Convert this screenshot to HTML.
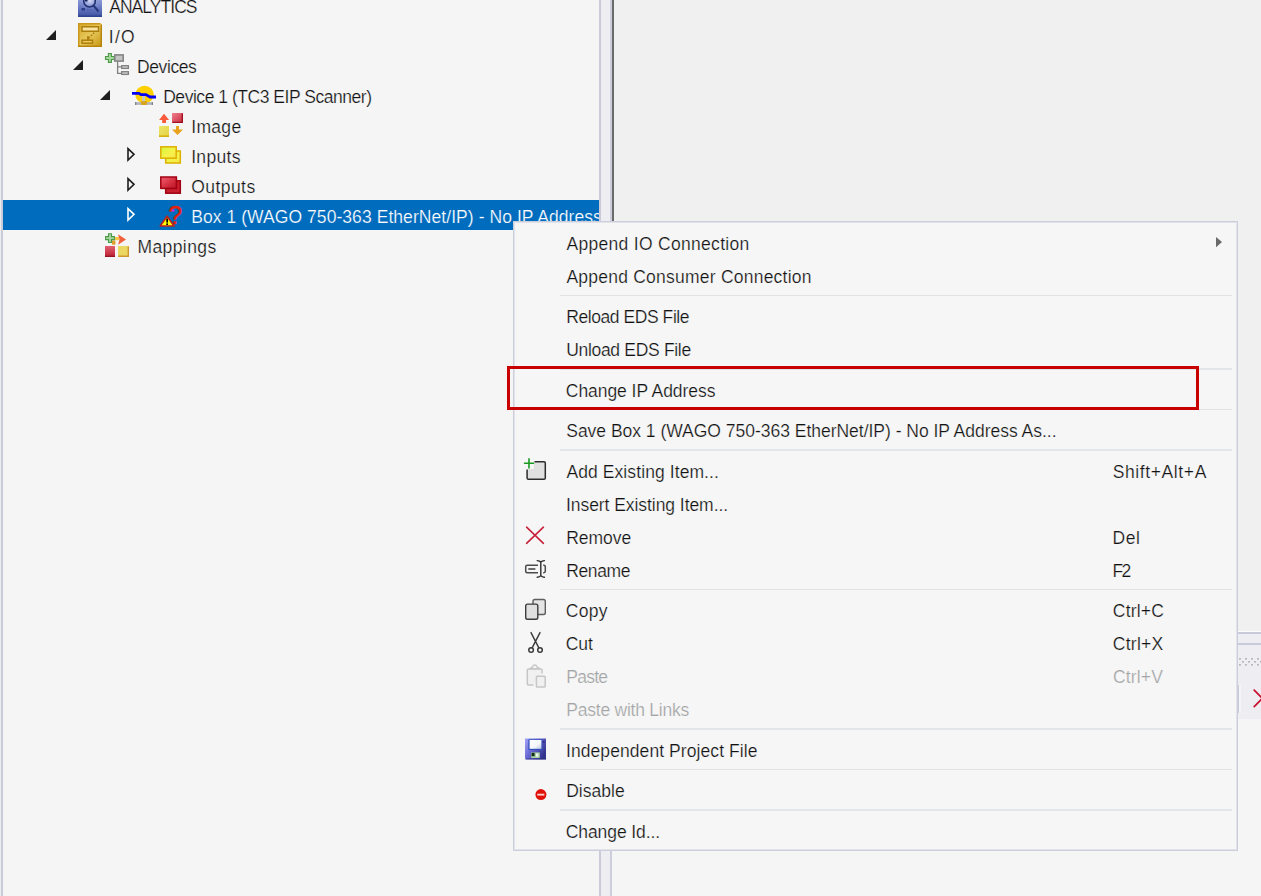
<!DOCTYPE html>
<html lang="en"><head><meta charset="utf-8"><title>Solution Explorer - Context Menu</title>
<style>
html,body{margin:0;padding:0}
body{width:1261px;height:896px;overflow:hidden;position:relative;background:#f5f5f5;font-family:"Liberation Sans",sans-serif;font-size:17.5px;color:#121212}
div,span,svg{position:absolute;display:block}
.t{white-space:nowrap;line-height:20px;height:20px;-webkit-text-stroke:0.22px #f6f6f6}
#tree .t{-webkit-text-stroke-color:#f5f5f5}
#tree .t.w{-webkit-text-stroke-color:#006cbe}
#tree{left:0;top:0;width:599px;height:896px;overflow:hidden;background:#f5f5f5}
#tree .edge0{left:0;top:0;width:1px;height:896px;background:#eeeef2}
#tree .edge1{left:1px;top:0;width:2px;height:896px;background:#c9cbd9}
.row{left:3px;width:596px;height:30px}
.row.sel{background:#006cbe}
#split{left:599px;top:0;width:13px;height:896px;background:#eeeef2}
#edge{left:612px;top:0;width:2px;height:632px;background:#6a6a6a}
#split i{position:absolute;display:block;top:0;height:896px}
#right{left:612px;top:0;width:649px;height:896px;background:#f0f0f0}
#rlow{left:1238px;top:631px;width:23px;height:88px;background:#eeeef2}
#rbot{left:612px;top:719px;width:649px;height:177px;background:#f5f5f5}
#menu{left:513px;top:221px;width:723px;height:628px;background:#f6f6f6;border:1px solid #cccedb;box-shadow:inset 0 0 0 1px #e1e2ea}
.sep{left:560px;width:672px;background:#e0e3e6;height:1px}
.sep.k{height:2px;background:#e3e6e9}
#ctx{left:0;top:0;width:1261px;height:896px}
#hl{left:507px;top:366px;width:686px;height:38px;border:3px solid #c80000}
</style></head>
<body>
<div id="right"></div>
<div id="rbot"></div>
<div id="rlow"><svg width="23" height="88" viewBox="1238 631 23 88" style="left:0;top:0"><rect x="1238" y="631" width="23" height="1" fill="#fdfdfd"/><rect x="1238" y="632" width="23" height="2" fill="#c9cbdb"/><rect x="1238" y="643" width="23" height="2" fill="#c9cbdb"/><rect x="1239.25" y="658.15" width="1.4" height="1.4" fill="#969696"/><rect x="1245.25" y="658.15" width="1.4" height="1.4" fill="#969696"/><rect x="1251.25" y="658.15" width="1.4" height="1.4" fill="#969696"/><rect x="1257.25" y="658.15" width="1.4" height="1.4" fill="#969696"/><rect x="1242.25" y="661.15" width="1.4" height="1.4" fill="#969696"/><rect x="1248.25" y="661.15" width="1.4" height="1.4" fill="#969696"/><rect x="1254.25" y="661.15" width="1.4" height="1.4" fill="#969696"/><rect x="1260.25" y="661.15" width="1.4" height="1.4" fill="#969696"/><rect x="1239.25" y="664.15" width="1.4" height="1.4" fill="#969696"/><rect x="1245.25" y="664.15" width="1.4" height="1.4" fill="#969696"/><rect x="1251.25" y="664.15" width="1.4" height="1.4" fill="#969696"/><rect x="1257.25" y="664.15" width="1.4" height="1.4" fill="#969696"/><rect x="1238" y="685" width="1" height="28" fill="#c9cbdb"/><rect x="1239" y="685" width="2" height="28" fill="#f5f5f7"/><path d="M1254.2 690.2 L1263 699 M1254.2 706.6 L1263 697.8" stroke="#c8102e" stroke-width="1.7" fill="none" stroke-linecap="round"/></svg></div>
<div id="tree" role="tree" aria-label="Solution Explorer"><div class="edge0"></div><div class="edge1"></div>
<div class="row" style="top:-10px"></div>
<div class="row" style="top:20px"></div>
<div class="row" style="top:50px"></div>
<div class="row" style="top:80px"></div>
<div class="row" style="top:110px"></div>
<div class="row" style="top:140px"></div>
<div class="row" style="top:170px"></div>
<div class="row sel" style="top:200px"></div>
<div class="row" style="top:230px"></div>
<svg width="13" height="14" viewBox="45 28 13 14" style="left:45px;top:28px"><polygon points="56,30 56,40 46,40" fill="#1e1e1e"/></svg>
<svg width="13" height="14" viewBox="72 58 13 14" style="left:72px;top:58px"><polygon points="83,60 83,70 73,70" fill="#1e1e1e"/></svg>
<svg width="13" height="14" viewBox="99 88 13 14" style="left:99px;top:88px"><polygon points="110,90 110,100 100,100" fill="#1e1e1e"/></svg>
<svg width="13" height="20" viewBox="125 145 13 20" style="left:125px;top:145px"><path d="M128 148.6 L128 160.1 L134 154.35 Z" fill="none" stroke="#1e1e1e" stroke-width="1.6" stroke-linejoin="miter"/></svg>
<svg width="13" height="20" viewBox="125 175 13 20" style="left:125px;top:175px"><path d="M128 178.6 L128 190.1 L134 184.35 Z" fill="none" stroke="#1e1e1e" stroke-width="1.6" stroke-linejoin="miter"/></svg>
<svg width="13" height="20" viewBox="125 205 13 20" style="left:125px;top:205px"><path d="M128 208.6 L128 220.1 L134 214.35 Z" fill="none" stroke="#ffffff" stroke-width="1.6" stroke-linejoin="miter"/></svg>
<svg width="24" height="24" viewBox="78 -7 24 24" style="left:78px;top:-7px"><defs><linearGradient id="ga" x1="0" y1="0" x2="0" y2="1"><stop offset="0" stop-color="#a9b4e6"/><stop offset="0.55" stop-color="#6f80c8"/><stop offset="1" stop-color="#3a4f9e"/></linearGradient><radialGradient id="gb" cx="0.5" cy="0.35" r="0.5"><stop offset="0" stop-color="#dfe4fa" stop-opacity="0.9"/><stop offset="1" stop-color="#8a98d6" stop-opacity="0"/></radialGradient></defs><rect x="78" y="-7" width="24" height="24" fill="url(#ga)"/><rect x="80" y="-5" width="20" height="17" fill="url(#gb)"/><circle cx="89.5" cy="1.2" r="5.8" fill="none" stroke="#1f2f6e" stroke-width="1.6"/><path d="M93.5 5.5 L98.5 11.5" stroke="#26377a" stroke-width="2"/><rect x="81.5" y="8" width="3.5" height="2.5" fill="#2b3d85"/><rect x="87" y="9.2" width="1.5" height="1.5" fill="#4e60aa"/><rect x="90" y="9.2" width="1.5" height="1.5" fill="#4e60aa"/><rect x="85" y="-1" width="2.5" height="2.5" fill="#16245c"/><rect x="90" y="-2" width="3" height="1.6" fill="#2b3d85"/><rect x="78" y="15.5" width="24" height="1.5" fill="#2f4390"/></svg>
<svg width="24" height="24" viewBox="78 23 24 24" style="left:78px;top:23px"><defs><linearGradient id="gi" x1="0" y1="0" x2="1" y2="1"><stop offset="0" stop-color="#d6a526"/><stop offset="0.5" stop-color="#e7c85c"/><stop offset="1" stop-color="#c4930f"/></linearGradient></defs><path d="M78 23 H100.5 L102 24.5 V47 H78 Z" fill="url(#gi)"/><path d="M78.75 47 V23.75 H100.2" fill="none" stroke="#c9981c" stroke-width="1.5"/><path d="M78 46.25 H101.25 V24.5" fill="none" stroke="#b5850c" stroke-width="1.5"/><rect x="82" y="26.75" width="16.5" height="4.5" fill="#f6e3a0" stroke="#ad7d0a" stroke-width="1.5"/><path d="M94.2 32.6 L89.8 37" stroke="#ad7d0a" stroke-width="1.5" stroke-dasharray="1.6 1.4"/><rect x="87" y="36.3" width="2.6" height="3.4" fill="#ad7d0a"/><rect x="82" y="40.2" width="10.5" height="3" fill="#ecc95a" stroke="#ad7d0a" stroke-width="1.5"/></svg>
<svg width="26" height="24" viewBox="104 52 26 24" style="left:104px;top:52px"><path d="M108.4 53.550000000000004 H111.4 V56.45 H114.30000000000001 V59.45 H111.4 V62.35 H108.4 V59.45 H105.5 V56.45 H108.4 Z" fill="#a5d69c" stroke="#4b9a48" stroke-width="1.1"/><rect x="114.8" y="54.9" width="8.4" height="6.2" fill="#c3c3c3" stroke="#808080" stroke-width="1.5"/><path d="M117.6 61.5 V73.3 H121.5 M117.6 66.9 H121.5" fill="none" stroke="#808080" stroke-width="1.3"/><rect x="121.7" y="65.7" width="6.7" height="2.7" fill="#cfcfcf" stroke="#808080" stroke-width="1.3"/><rect x="121.7" y="71.7" width="6.7" height="2.7" fill="#cfcfcf" stroke="#808080" stroke-width="1.3"/></svg>
<svg width="27" height="23" viewBox="131 84 27 23" style="left:131px;top:84px"><ellipse cx="144.55" cy="94.6" rx="9.3" ry="8.8" fill="#ffd000"/><rect x="142.2" y="96" width="2.8" height="6" fill="#c4c6cf"/><rect x="135" y="102.1" width="18" height="2.8" fill="#b4b6be"/><rect x="135" y="102.1" width="1.3" height="2.8" fill="#808080"/><rect x="151.7" y="102.1" width="1.3" height="2.8" fill="#808080"/><rect x="141.1" y="101.2" width="5.8" height="3.7" fill="#d9a21c"/><path d="M132 93.3 H139 L141 94.6 H146 L150 97 H156" fill="none" stroke="#0000f5" stroke-width="2.8" stroke-linejoin="round"/></svg>
<svg width="26" height="26" viewBox="158 112 26 26" style="left:158px;top:112px"><defs><linearGradient id="gr1" x1="0" y1="0" x2="1" y2="1"><stop offset="0" stop-color="#f08090"/><stop offset="1" stop-color="#c8283c"/></linearGradient><linearGradient id="gy1" x1="0" y1="0" x2="1" y2="1"><stop offset="0" stop-color="#ece66a"/><stop offset="1" stop-color="#e6d040"/></linearGradient></defs><path d="M164 113.8 L169.1 120 H166 V123 H162.2 V120 H159.1 Z" fill="#f85a3c"/><rect x="172" y="113" width="11" height="10" fill="url(#gr1)"/><path d="M172.5 122.4 H182.3 V113.5" fill="none" stroke="#a0101f" stroke-width="1.3"/><rect x="159" y="126" width="10" height="11" fill="url(#gy1)"/><rect x="159" y="135.4" width="10" height="1.6" fill="#d6b010"/><path d="M176 126 H179 V129.4 H183 L177.5 135 L172 129.4 H176 Z" fill="#e9a21e"/></svg>
<svg width="24" height="20" viewBox="159 145 24 20" style="left:159px;top:145px"><defs><linearGradient id="gy2" x1="0" y1="0" x2="1" y2="1"><stop offset="0" stop-color="#d4f63c"/><stop offset="0.6" stop-color="#f6f24a"/><stop offset="1" stop-color="#f6e24a"/></linearGradient></defs><rect x="165.7" y="151" width="14.6" height="12" fill="url(#gy2)" stroke="#deb000" stroke-width="1.5"/><rect x="160.8" y="146.8" width="15.4" height="11.4" fill="url(#gy2)" stroke="#deb000" stroke-width="1.5"/></svg>
<svg width="24" height="20" viewBox="159 175 24 20" style="left:159px;top:175px"><defs><linearGradient id="gr2" x1="0" y1="0" x2="1" y2="1"><stop offset="0" stop-color="#f26272"/><stop offset="0.6" stop-color="#d22c3c"/><stop offset="1" stop-color="#bc1626"/></linearGradient></defs><rect x="165.7" y="180.8" width="14.6" height="12.4" fill="#c81e2e" stroke="#a00012" stroke-width="1.5"/><rect x="160.8" y="177" width="15.6" height="11.4" fill="url(#gr2)" stroke="#a00012" stroke-width="1.5"/></svg>
<svg width="25" height="25" viewBox="158 204 25 25" style="left:158px;top:204px"><text x="175.1" y="224" text-anchor="middle" font-family="Liberation Sans, sans-serif" font-weight="normal" font-size="25" stroke="#e2200e" stroke-width="0.5" fill="#e2200e">?</text><rect x="172.4" y="209.8" width="2" height="1.6" fill="#ff10f0"/><path d="M167.1 216.2 L174 226 H160.2 Z" fill="#ffff00" stroke="#c0201c" stroke-width="1.6" stroke-linejoin="round"/><rect x="166.3" y="218.6" width="1.7" height="4" fill="#000"/><rect x="166.3" y="223.4" width="1.7" height="1.6" fill="#000"/></svg>
<svg width="27" height="26" viewBox="104 232 27 26" style="left:104px;top:232px"><defs><linearGradient id="gr3" x1="0" y1="0" x2="0" y2="1"><stop offset="0" stop-color="#e06070"/><stop offset="0.8" stop-color="#c42c3e"/><stop offset="1" stop-color="#8c0e1e"/></linearGradient></defs><rect x="112" y="240.5" width="3.4" height="4.2" fill="#dea02a"/><rect x="114.5" y="237" width="5" height="3.2" fill="#f8c648"/><path d="M118 234.2 L126 239.5 L118 244.8 L119.6 239.5 Z" fill="#f0603a"/><path d="M108.5 233.75 H111.5 V236.65 H114.4 V239.65 H111.5 V242.55 H108.5 V239.65 H105.6 V236.65 H108.5 Z" fill="#a5d69c" stroke="#4b9a48" stroke-width="1.1"/><rect x="105" y="246" width="10" height="11" fill="url(#gr3)"/><rect x="118" y="246" width="11" height="11" fill="#ead862"/><path d="M118.4 256.3 H128.3 V246.4" fill="none" stroke="#cf982e" stroke-width="1.4"/></svg>
<span class="t" style="left:109.20px;top:-3px;letter-spacing:-0.957px">ANALYTICS</span>
<span class="t" style="left:108.84px;top:27px;letter-spacing:1.232px">I/O</span>
<span class="t" style="left:137.04px;top:57px;letter-spacing:-0.409px">Devices</span>
<span class="t" style="left:163.21px;top:87px;letter-spacing:-0.467px">Device 1 (TC3 EIP Scanner)</span>
<span class="t" style="left:191.19px;top:117px;letter-spacing:0.334px">Image</span>
<span class="t" style="left:191.19px;top:147px;letter-spacing:0.308px">Inputs</span>
<span class="t" style="left:191.23px;top:177px;letter-spacing:0.443px">Outputs</span>
<span class="t w" style="left:191.20px;top:207px;letter-spacing:0.065px;color:#ffffff">Box 1 (WAGO 750-363 EtherNet/IP) - No IP Address</span>
<span class="t" style="left:137.40px;top:237px;letter-spacing:0.422px">Mappings</span>
</div>
<div id="split"><i style="left:0;width:2px;background:#c9cbd9"></i><i style="left:11px;width:2px;background:#cccedb"></i></div><div id="edge"></div>
<div id="ctx" role="menu" aria-label="Context menu"><div id="menu"></div>
<div class="sep" style="top:295px"></div>
<div class="sep k" style="top:368px"></div>
<div class="sep" style="top:409px"></div>
<div class="sep k" style="top:449px"></div>
<div class="sep" style="top:589px"></div>
<div class="sep k" style="top:728px"></div>
<div class="sep" style="top:769px"></div>
<div class="sep k" style="top:809px"></div>
<svg width="10" height="14" viewBox="1214 235 10 14" style="left:1214px;top:235px"><polygon points="1216,237 1222,242.1 1216,247.2" fill="#6a6a6a"/></svg>
<svg width="26" height="26" viewBox="522 456 26 26" style="left:522px;top:456px"><path d="M534.5 461.75 H544 a1.3 1.3 0 0 1 1.3 1.3 V478 a1.3 1.3 0 0 1 -1.3 1.3 H528.4 a1.3 1.3 0 0 1 -1.3 -1.3 V469.5" fill="#e0e0e0" stroke="#2c2c2c" stroke-width="1.5"/><rect x="527.8" y="462.4" width="6" height="6.6" fill="#f6f6f6"/><path d="M529 458.2 V468.4 M523.9 463.3 H534.1" stroke="#1a9a20" stroke-width="1.6" fill="none"/></svg>
<svg width="22" height="21" viewBox="524 525 22 21" style="left:524px;top:525px"><path d="M526.6 527.2 L543.4 543.3 M543.4 527.2 L526.6 543.3" stroke="#c8203a" stroke-width="1.6" fill="none" stroke-linecap="round"/></svg>
<svg width="25" height="22" viewBox="523 558 25 22" style="left:523px;top:558px"><path d="M538 565.25 H527.2 a1.5 1.5 0 0 0 -1.5 1.5 V571.2 a1.5 1.5 0 0 0 1.5 1.5 H538 M543.2 565.25 H543.9 a1.4 1.4 0 0 1 1.4 1.4 V571.3 a1.4 1.4 0 0 1 -1.4 1.4 H543.2" fill="none" stroke="#4a4a4a" stroke-width="1.5"/><path d="M528.3 569 H535.4" stroke="#4a4a4a" stroke-width="1.6" fill="none"/><path d="M537.2 560.6 Q539.8 560.8 540.8 562.2 Q541.8 560.8 544.4 560.6 M540.8 562 V575.8 M537.2 577.3 Q539.8 577.1 540.8 575.7 Q541.8 577.1 544.4 577.3" fill="none" stroke="#2c2c2c" stroke-width="1.4" stroke-linecap="round"/></svg>
<svg width="25" height="25" viewBox="523 597 25 25" style="left:523px;top:597px"><rect x="533" y="599.5" width="12.3" height="15" rx="1.8" fill="#e4e4e4" stroke="#5e5e5e" stroke-width="1.4"/><rect x="525.7" y="604.1" width="12.1" height="15.1" rx="1.8" fill="#e0e0e0" stroke="#3c3c3c" stroke-width="1.4"/></svg>
<svg width="20" height="25" viewBox="526 630 20 25" style="left:526px;top:630px"><path d="M531 632.6 L538.6 647.4 M540 632.6 L532.4 647.4" stroke="#3a3a3a" stroke-width="1.4" fill="none" stroke-linecap="round"/><circle cx="531.1" cy="650" r="2.3" fill="none" stroke="#3a3a3a" stroke-width="1.5"/><circle cx="540" cy="650" r="2.3" fill="none" stroke="#3a3a3a" stroke-width="1.5"/></svg>
<svg width="24" height="28" viewBox="524 662 24 28" style="left:524px;top:662px"><path d="M533.5 685.1 H528.6 a1.3 1.3 0 0 1 -1.3 -1.3 V670.3 a1.3 1.3 0 0 1 1.3 -1.3 H540.8 a1.3 1.3 0 0 1 1.3 1.3 V673.4" fill="#f0f0f0" stroke="#c6c6c6" stroke-width="1.5"/><path d="M530 668.6 L532.6 666.9 a2.2 2.4 0 0 1 4.3 0 L539.6 668.6 Z" fill="#f6f6f6" stroke="#c6c6c6" stroke-width="1.4" stroke-linejoin="round"/><rect x="536.4" y="676.3" width="8.8" height="10.8" rx="0.8" fill="#f0f0f0" stroke="#c6c6c6" stroke-width="1.5"/></svg>
<svg width="24" height="24" viewBox="524 737 24 24" style="left:524px;top:737px"><defs><linearGradient id="gf" x1="0" y1="0" x2="1" y2="0.6"><stop offset="0" stop-color="#a4a4fa"/><stop offset="0.45" stop-color="#6a6ad6"/><stop offset="1" stop-color="#34348e"/></linearGradient><linearGradient id="gw" x1="0" y1="0" x2="1" y2="1"><stop offset="0" stop-color="#ffffff"/><stop offset="0.6" stop-color="#f4f6fb"/><stop offset="1" stop-color="#bcc6e0"/></linearGradient></defs><path d="M525 738.5 H546 V759.5 H526.5 L525 758 Z" fill="url(#gf)"/><rect x="528.4" y="739.4" width="14" height="10.6" fill="#3450bc"/><rect x="529.6" y="740" width="11.8" height="8.8" fill="url(#gw)"/><rect x="542.8" y="741" width="1.8" height="1.8" fill="#2c2c80"/><rect x="531.2" y="752.4" width="8.6" height="5.6" fill="#a9d0a0"/><rect x="531.6" y="752.8" width="3" height="3.4" fill="#14301a"/><rect x="536" y="753.6" width="2.4" height="3" fill="#eef2fb"/><rect x="525" y="758.4" width="21" height="1.1" fill="#30308a" opacity="0.6"/></svg>
<svg width="14" height="14" viewBox="534 788 14 14" style="left:534px;top:788px"><circle cx="540.9" cy="794.6" r="5.5" fill="#e01208"/><rect x="537.3" y="793.7" width="7.1" height="1.9" fill="#f9cfcc"/></svg>
<span class="t" style="left:566.42px;top:234px;letter-spacing:0.306px">Append IO Connection</span>
<span class="t" style="left:566.42px;top:267px;letter-spacing:0.231px">Append Consumer Connection</span>
<span class="t" style="left:566.22px;top:307px;letter-spacing:-0.433px">Reload EDS File</span>
<span class="t" style="left:566.20px;top:340px;letter-spacing:-0.315px">Unload EDS File</span>
<span class="t" style="left:565.80px;top:381px;letter-spacing:-0.054px">Change IP Address</span>
<span class="t" style="left:566.24px;top:421px;letter-spacing:-0.016px">Save Box 1 (WAGO 750-363 EtherNet/IP) - No IP Address As...</span>
<span class="t" style="left:566.42px;top:462px;letter-spacing:0.091px">Add Existing Item...</span>
<span class="t" style="left:565.99px;top:495px;letter-spacing:-0.058px">Insert Existing Item...</span>
<span class="t" style="left:566.22px;top:528px;letter-spacing:-0.041px">Remove</span>
<span class="t" style="left:566.22px;top:561px;letter-spacing:-0.370px">Rename</span>
<span class="t" style="left:565.81px;top:601px;letter-spacing:0.264px">Copy</span>
<span class="t" style="left:565.80px;top:634px;letter-spacing:-0.091px">Cut</span>
<span class="t" style="left:566.30px;top:667px;letter-spacing:-0.747px;color:#a2a4a5">Paste</span>
<span class="t" style="left:566.30px;top:700px;letter-spacing:-0.230px;color:#a2a4a5">Paste with Links</span>
<span class="t" style="left:565.99px;top:741px;letter-spacing:0.079px">Independent Project File</span>
<span class="t" style="left:566.22px;top:781px;letter-spacing:0.006px">Disable</span>
<span class="t" style="left:565.80px;top:822px;letter-spacing:-0.093px">Change Id...</span>
<span class="t" style="left:1112.64px;top:462px;letter-spacing:0.619px">Shift+Alt+A</span>
<span class="t" style="left:1112.39px;top:528px;letter-spacing:0.664px">Del</span>
<span class="t" style="left:1112.39px;top:561px;letter-spacing:-1.497px">F2</span>
<span class="t" style="left:1112.80px;top:601px;letter-spacing:0.212px">Ctrl+C</span>
<span class="t" style="left:1112.80px;top:634px;letter-spacing:0.263px">Ctrl+X</span>
<span class="t" style="left:1112.89px;top:667px;letter-spacing:0.186px;color:#a2a4a5">Ctrl+V</span>
</div>
<div id="hl"></div>
</body></html>
